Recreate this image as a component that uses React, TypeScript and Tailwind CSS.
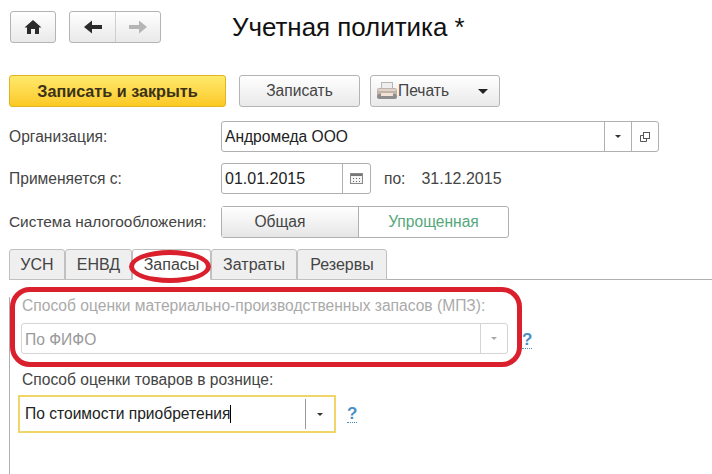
const font = { fontFamily: '"Liberation Sans", Arial, sans-serif' };

function Caret({ className = "border-t-[#333]" }: { className?: string }) {
  return <span className={`block w-0 h-0 border-x-[3.5px] border-x-transparent border-t-[3.5px] ${className}`} />;
}

function HomeIcon() {
  return (
    <svg width="18" height="16" viewBox="0 0 18 16" fill="#2b2b2b">
      <path d="M9 1 L17.5 8.5 L15 8.5 L15 15 L11 15 L11 10 L7 10 L7 15 L3 15 L3 8.5 L0.5 8.5 Z" />
    </svg>
  );
}

function ArrowIcon({ dir, color }: { dir: "left" | "right"; color: string }) {
  return (
    <svg width="18" height="14" viewBox="0 0 18 14" fill={color} className={dir === "right" ? "rotate-180" : ""}>
      <path d="M0 7 L8 0.5 L8 5 L18 5 L18 9 L8 9 L8 13.5 Z" />
    </svg>
  );
}

function PrinterIcon() {
  return (
    <svg width="22" height="20" viewBox="0 0 22 20">
      <rect x="5.5" y="1.5" width="11" height="7" fill="#eeeeee" stroke="#b5b5b5" />
      <rect x="1" y="7" width="20" height="8" rx="2" fill="#c2b3a7" />
      <rect x="2" y="8" width="18" height="2" rx="1" fill="#ddd3cb" />
      <rect x="1" y="13" width="20" height="5" rx="2" fill="#8d8d8d" />
      <rect x="5" y="12" width="12" height="3" fill="#f3e3d6" />
    </svg>
  );
}

function CalendarIcon() {
  return (
    <svg width="13" height="11" viewBox="0 0 13 11">
      <rect x="0.5" y="0.5" width="12" height="10" fill="#f4f4f4" stroke="#8a8a8a" />
      <rect x="1" y="1" width="11" height="2" fill="#777" />
      <path d="M3 5h1v1H3zM6 5h1v1H6zM9 5h1v1H9zM3 8h1v1H3zM6 8h1v1H6zM9 8h1v1H9z" fill="#666" />
    </svg>
  );
}

function OpenIcon() {
  return (
    <svg width="12" height="12" viewBox="0 0 12 12" fill="none" stroke="#555">
      <rect x="4.5" y="1.5" width="6" height="6" fill="#fff" />
      <path d="M4.5 4.5H1.5V10.5H7.5V7.5" />
    </svg>
  );
}

function Help({ className = "" }: { className?: string }) {
  return (
    <span className={`text-[17px] leading-[17px] font-bold text-[#4a8fc4] border-b border-dotted border-[#4a8fc4] ${className}`}>
      ?
    </span>
  );
}

const tabs = [
  { label: "УСН", w: "w-[56px]" },
  { label: "ЕНВД", w: "w-[67px]" },
  { label: "Запасы", w: "w-[79px]", active: true },
  { label: "Затраты", w: "w-[86px]" },
  { label: "Резервы", w: "w-[90px]" },
];

export default function App() {
  return (
    <div style={font} className="relative w-[712px] h-[474px] overflow-hidden bg-white text-[15.6px] text-[#444]">
      {/* Top navigation and title */}
      <div className="flex items-center h-[31px] mt-[11px] ml-[10px]">
        <button className="w-[46px] h-[32px] flex items-center justify-center rounded-[3px] border border-[#b4b4b4] bg-gradient-to-b from-white to-[#e9e9e9]">
          <HomeIcon />
        </button>
        <div className="w-[92px] h-[32px] ml-[13px] flex rounded-[3px] border border-[#b4b4b4] bg-gradient-to-b from-white to-[#e9e9e9]">
          <div className="w-[46px] flex items-center justify-center border-r border-[#cfcfcf]">
            <ArrowIcon dir="left" color="#2b2b2b" />
          </div>
          <div className="flex-1 flex items-center justify-center">
            <ArrowIcon dir="right" color="#b5b5b5" />
          </div>
        </div>
        <h1 className="ml-[71px] text-[25.9px] leading-[32px] text-[#111] whitespace-nowrap">Учетная политика *</h1>
      </div>

      {/* Command bar */}
      <div className="flex mt-[33px] ml-[9px] h-[32px]">
        <button className="w-[217px] rounded-[3px] border border-[#e0b520] bg-gradient-to-b from-[#ffe96a] to-[#fbc91f] text-[16.2px] font-bold text-[#3a3218]">
          Записать и закрыть
        </button>
        <button className="w-[121px] ml-[13px] rounded-[3px] border border-[#b4b4b4] bg-gradient-to-b from-white to-[#e9e9e9]">
          Записать
        </button>
        <button className="w-[130px] ml-[10px] flex items-center pl-[5px] rounded-[3px] border border-[#b4b4b4] bg-gradient-to-b from-white to-[#e9e9e9]">
          <PrinterIcon />
          <span>Печать</span>
          <Caret className="ml-[29px] border-t-[#222] border-x-[5px] border-t-[5px]" />
        </button>
      </div>

      {/* Organization */}
      <div className="flex items-center mt-[14px] ml-[9px] h-[31px]">
        <span className="w-[212px]">Организация:</span>
        <div className="w-[438px] h-[31px] flex rounded-[3px] border border-[#b0b0b0]">
          <span className="flex-1 pl-[3px] leading-[29px] text-[#222]">Андромеда ООО</span>
          <span className="w-[27px] flex items-center justify-center border-l border-[#b0b0b0]">
            <Caret />
          </span>
          <span className="w-[27px] flex items-center justify-center border-l border-[#b0b0b0]">
            <OpenIcon />
          </span>
        </div>
      </div>

      {/* Period */}
      <div className="flex items-center mt-[11px] ml-[9px] h-[31px]">
        <span className="w-[212px]">Применяется с:</span>
        <div className="w-[150px] h-[31px] flex rounded-[3px] border border-[#b0b0b0]">
          <span className="flex-1 pl-[3px] leading-[29px] text-[16px] text-[#222]">01.01.2015</span>
          <span className="w-[28px] flex items-center justify-center border-l border-[#b0b0b0]">
            <CalendarIcon />
          </span>
        </div>
        <span className="ml-[13px]">по:</span>
        <span className="ml-[16px] text-[16px]">31.12.2015</span>
      </div>

      {/* Tax system */}
      <div className="flex items-center mt-[12px] ml-[9px] h-[32px]">
        <span className="w-[212px] whitespace-nowrap text-[15.4px]">Система налогообложения:</span>
        <div className="w-[288px] h-[32px] flex rounded-[3px] border border-[#b0b0b0]">
          <span className="w-[137px] flex items-center justify-center pr-[20px] border-r border-[#b0b0b0] bg-gradient-to-b from-white to-[#e6e6e6]">
            Общая
          </span>
          <span className="flex-1 flex items-center justify-center text-[#55a87a]">Упрощенная</span>
        </div>
      </div>

      {/* Tabs */}
      <div className="flex mt-[11px] ml-[9px] h-[31px] border-b border-[#b0b0b0] text-[16px]">
        {tabs.map((t) => (
          <div
            key={t.label}
            className={`${t.w} h-[31px] flex items-center justify-center rounded-t-[3px] border border-[#c0c0c0] ${
              t.active ? "bg-white border-b-white" : "bg-[#efefef]"
            }`}
          >
            {t.label}
          </div>
        ))}
      </div>

      {/* Tab page */}
      <div className="ml-[9px] h-[194px] border-l border-[#b0b0b0] pl-[11px]">
        <div className="mt-[17px] text-[#aaaaaa] pl-[1px] leading-[18px] whitespace-nowrap">
          Способ оценки материально-производственных запасов (МПЗ):
        </div>
        <div className="flex items-center mt-[8px]">
          <div className="w-[487px] h-[31px] flex rounded-[3px] border border-[#d4d4d4] text-[#9a9a9a]">
            <span className="flex-1 pl-[3px] pt-[1px] leading-[29px]">По ФИФО</span>
            <span className="w-[27px] flex items-center justify-center border-l border-[#d4d4d4]">
              <Caret className="border-t-[#a8a8a8]" />
            </span>
          </div>
          <Help className="ml-[14px] mt-[3px]" />
        </div>
        <div className="mt-[17px] ml-[1px] leading-[18px]">Способ оценки товаров в рознице:</div>
        <div className="flex items-center mt-[6px] -ml-[3px]">
          <div className="w-[318px] h-[38px] flex items-center border-2 border-[#f0d668]">
            <span className="flex-1 pl-[5px] flex items-center text-[#222]">
              По стоимости приобретения
              <span className="w-px h-[18px] bg-black" />
            </span>
            <span className="w-[29px] h-[30px] flex items-center justify-center border-l border-[#9a9a9a]">
              <Caret />
            </span>
          </div>
          <Help className="ml-[11px]" />
        </div>
      </div>

      {/* Red hand-drawn annotations */}
      <div className="absolute left-[129px] top-[250px] w-[82px] h-[33px] rounded-[50%] border-[5px] border-[#d9202c]" />
      <div className="absolute left-[10px] top-[287px] w-[512px] h-[80px] rounded-[20px] border-[5px] border-[#d9202c]" />
    </div>
  );
}
